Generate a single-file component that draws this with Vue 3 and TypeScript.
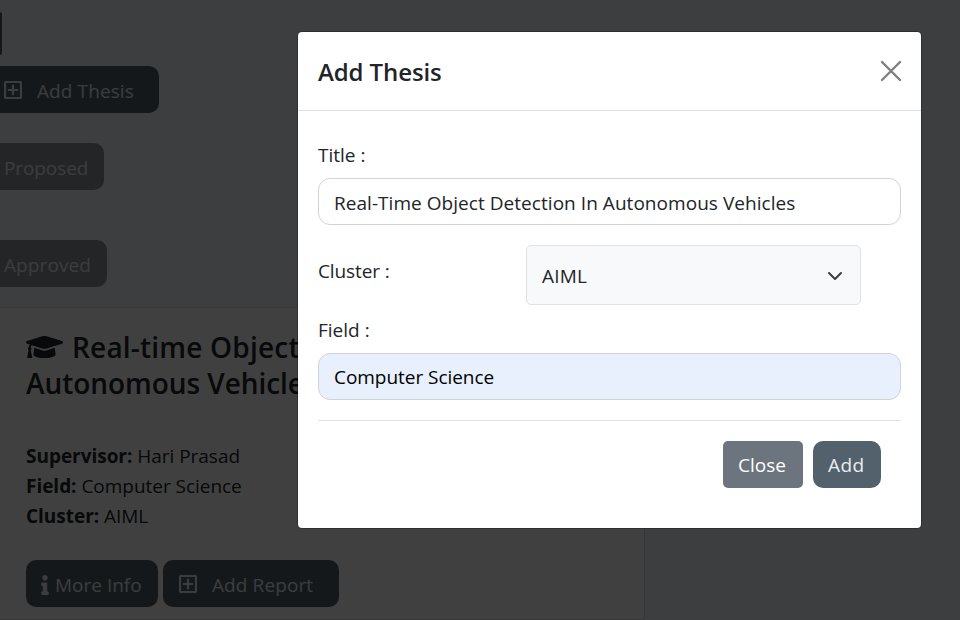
<script setup lang="ts">
import { ref } from 'vue'

interface Detail {
  label: string
  value: string
}

const title = ref('Real-Time Object Detection In Autonomous Vehicles')
const field = ref('Computer Science')
const cluster = ref('AIML')

const details: Detail[] = [
  { label: 'Supervisor:', value: 'Hari Prasad' },
  { label: 'Field:', value: 'Computer Science' },
  { label: 'Cluster:', value: 'AIML' },
]
</script>

<template>
  <div class="screen">
    <main class="page">
      <div class="nav-button"></div>
      <button class="btn add-thesis">
        <svg class="plus" viewBox="0 0 18 18"><rect x="1" y="1" width="16" height="16" rx="1" /><path d="M9 3.8v10.4M3.8 9h10.4" /></svg>
        <span class="t-add-thesis">Add Thesis</span>
      </button>
      <button class="btn muted proposed"><span>Proposed</span></button>
      <button class="btn muted approved"><span class="t-approved">Approved</span></button>
      <section class="card">
        <h2 class="heading">
          <span class="line"><svg class="cap" viewBox="0 0 640 512"><path d="M622.34 153.2 343.4 67.5c-15.2-4.67-31.6-4.67-46.79 0L17.66 153.2c-23.54 7.23-23.54 38.36 0 45.59l48.63 14.94c-10.67 13.19-17.23 29.28-17.88 46.9C38.78 266.15 32 276.11 32 288c0 10.78 5.68 19.85 13.86 25.65L20.33 428.53C18.11 438.52 25.71 448 35.94 448h56.11c10.24 0 17.84-9.48 15.62-19.47L82.14 313.65C90.32 307.85 96 298.78 96 288c0-11.57-6.47-21.25-15.66-26.87.76-15.02 8.44-28.3 20.69-36.72L296.6 284.5c9.06 2.78 26.44 6.25 46.79 0l278.95-85.7c23.55-7.24 23.55-38.36 0-45.6zM352.79 315.09c-28.53 8.76-52.84 3.92-65.59 0l-145.02-44.55L128 384c0 35.35 85.96 64 192 64s192-28.65 192-64l-14.18-113.47-145.03 44.56z" /></svg><span class="t-h1">Real-time Object</span></span>
          <span class="line"><span class="t-h2">Autonomous Vehicles</span></span>
        </h2>
        <div class="details">
          <div v-for="d in details" :key="d.label" class="detail"><strong>{{ d.label }}</strong> <span>{{ d.value }}</span></div>
        </div>
        <div class="actions">
          <button class="btn info">
            <svg class="i" viewBox="0 0 192 512"><path d="M20 424.229h20V279.771H20c-11.046 0-20-8.954-20-20V212c0-11.046 8.954-20 20-20h112c11.046 0 20 8.954 20 20v212.229h20c11.046 0 20 8.954 20 20V492c0 11.046-8.954 20-20 20H20c-11.046 0-20-8.954-20-20v-47.771c0-11.046 8.954-20 20-20zM96 0C56.235 0 24 32.235 24 72s32.235 72 72 72 72-32.235 72-72S135.764 0 96 0z" /></svg>
            <span>More Info</span>
          </button>
          <button class="btn report">
            <svg class="plus" viewBox="0 0 18 18"><rect x="1" y="1" width="16" height="16" rx="1" /><path d="M9 3.8v10.4M3.8 9h10.4" /></svg>
            <span class="t-report">Add Report</span>
          </button>
        </div>
      </section>
    </main>

    <div class="backdrop">
      <div class="modal">
        <header class="modal-header">
          <h1 class="modal-title">Add Thesis</h1>
          <svg class="close" viewBox="0 0 22 22"><path d="M2 2l18 18M20 2L2 20" /></svg>
        </header>
        <div class="modal-body">
          <label class="label title-label">Title :</label>
          <div class="input"><span class="t-title">{{ title }}</span></div>
          <div class="cluster-row">
            <label class="label">Cluster :</label>
            <div class="select">
              <span class="t-aiml">{{ cluster }}</span>
              <svg class="chevron" viewBox="0 0 14 9"><path d="M1 1l6 6 6-6" /></svg>
            </div>
          </div>
          <label class="label field-label">Field :</label>
          <div class="input filled"><span class="t-field">{{ field }}</span></div>
          <footer class="footer">
            <button class="btn close-btn"><span>Close</span></button>
            <button class="btn add-btn"><span class="t-add">Add</span></button>
          </footer>
        </div>
      </div>
    </div>
  </div>
</template>

<style>
body {
  margin: 0;
}
</style>

<style scoped>
* {
  box-sizing: border-box;
}
.screen {
  position: relative;
  width: 960px;
  height: 620px;
  overflow: hidden;
  background: #f3f6f9;
  color: #212529;
  font-family: 'Open Sans', 'Noto Sans', sans-serif;
  font-size: 19px;
  line-height: 30px;
}
span,
strong,
h1,
label {
  white-space: nowrap;
}
.page {
  height: 620px;
  display: flex;
  flex-direction: column;
  align-items: flex-start;
  padding-top: 12px;
}
.btn {
  display: flex;
  align-items: center;
  height: 47px;
  margin: 0;
  padding: 2px 0 0;
  border: 0;
  border-radius: 10px;
  background: #53616c;
  color: #e9eef2;
  font: inherit;
  flex: none;
}
.nav-button {
  width: 2px;
  height: 43px;
  border-radius: 0 3px 3px 0;
  background: #53616c;
  flex: none;
}
.add-thesis {
  width: 159px;
  margin-top: 11px;
  padding-left: 4px;
  gap: 15px;
  border-radius: 0 10px 10px 0;
}
.t-add-thesis,
.t-approved,
.t-report {
  letter-spacing: 0.1px;
}
.plus {
  width: 18px;
  height: 18px;
  margin-top: -1px;
  flex: none;
  fill: none;
  stroke: currentColor;
  stroke-width: 2.2;
}
.muted {
  border-radius: 0 10px 10px 0;
  opacity: 0.65;
  padding-left: 4px;
}
.proposed {
  width: 104px;
  margin-top: 30px;
  letter-spacing: -0.1px;
}
.approved {
  width: 107px;
  margin-top: 50px;
}
.card {
  width: 645px;
  height: 313px;
  margin-top: 20px;
  padding: 21px 0 0 26px;
  border: 1px solid #dfe0e1;
  border-left: 0;
  background: #fff;
  flex: none;
}
.heading {
  margin: 0;
  font-size: 28px;
  font-weight: 600;
  line-height: 36px;
}
.line {
  display: flex;
  align-items: center;
  height: 36px;
}
.t-h1 {
  letter-spacing: 0.2px;
}
.t-h2 {
  letter-spacing: -0.05px;
}
.cap {
  width: 37px;
  height: 30px;
  margin-right: 9px;
  flex: none;
  fill: currentColor;
}
.details {
  margin-top: 40px;
  letter-spacing: -0.03px;
}
.detail {
  height: 30px;
}
.actions {
  display: flex;
  gap: 5px;
  margin-top: 29px;
}
.info {
  width: 132px;
  padding-left: 15px;
  gap: 6px;
}
.i {
  width: 8px;
  height: 20px;
  flex: none;
  fill: currentColor;
}
.report {
  width: 176px;
  padding-left: 16px;
  gap: 15px;
}
.backdrop {
  position: absolute;
  inset: 0;
  padding: 32px 0 0 298px;
  background: rgba(0, 0, 0, 0.75);
}
.modal {
  width: 623px;
  height: 496px;
  border-radius: 4px;
  background: #fff;
  box-shadow: 0 0 0 1px rgba(0, 0, 0, 0.25);
}
.modal-header {
  display: flex;
  align-items: center;
  justify-content: space-between;
  height: 79px;
  padding: 0 19px 1px 20px;
  border-bottom: 1px solid #dee2e6;
}
.modal-title {
  margin: 0;
  padding-top: 3px;
  font-size: 24px;
  font-weight: 600;
  line-height: 36px;
  letter-spacing: -0.1px;
}
.close {
  width: 22px;
  height: 22px;
  fill: none;
  stroke: #7f7f7f;
  stroke-width: 2.4;
  stroke-linecap: round;
}
.modal-body {
  padding: 0 20px;
}
.label {
  display: block;
  height: 30px;
}
.title-label {
  margin-top: 29px;
}
.input {
  display: flex;
  align-items: center;
  height: 47px;
  margin-top: 8px;
  padding: 2px 15px 0;
  border: 1px solid #ced4da;
  border-radius: 12px;
}
.t-title {
  letter-spacing: 0.045px;
}
.filled {
  padding-top: 0;
  background: #e8f0fe;
  color: #000;
}
.t-field {
  letter-spacing: -0.04px;
}
.cluster-row {
  display: flex;
  align-items: flex-start;
  justify-content: space-between;
  padding-right: 40px;
  margin-top: 20px;
}
.cluster-row .label {
  margin-top: 11px;
  letter-spacing: -0.1px;
}
.select {
  display: flex;
  align-items: center;
  justify-content: space-between;
  width: 335px;
  height: 60px;
  padding: 2px 18px 0 15px;
  border: 1px solid #dee2e6;
  border-radius: 5px;
  background: #f8f9fb;
}
.t-aiml {
  letter-spacing: 0.2px;
}
.chevron {
  width: 14px;
  height: 9px;
  fill: none;
  stroke: #343a40;
  stroke-width: 1.9;
  stroke-linecap: round;
  stroke-linejoin: round;
}
.field-label {
  margin-top: 10px;
}
.footer {
  display: flex;
  justify-content: flex-end;
  gap: 10px;
  margin-top: 20px;
  padding: 20px 20px 0 0;
  border-top: 1px solid #dee2e6;
}
.close-btn,
.add-btn {
  padding-top: 0;
}
.close-btn {
  width: 80px;
  padding-left: 15px;
  border-radius: 5px;
  background: #6c757d;
  color: #fff;
}
.add-btn {
  width: 68px;
  padding-left: 15px;
}
.t-add {
  letter-spacing: 0.4px;
}
</style>
